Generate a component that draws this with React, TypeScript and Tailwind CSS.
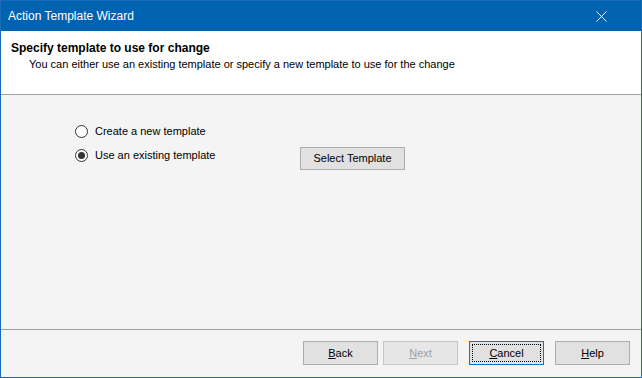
import React from 'react';

const font = { fontFamily: '"Liberation Sans", Arial, sans-serif' };

interface BtnProps {
  label: string;
  disabled?: boolean;
  focused?: boolean;
  className?: string;
}

const WinButton = ({ label, disabled, focused, className = '' }: BtnProps) => (
  <button
    className={`relative h-[24px] w-[75px] border text-[11px] leading-none ${
      focused ? 'border-[#0078d7]' : disabled ? 'border-[#c6c6c6]' : 'border-[#adadad]'
    } ${disabled ? 'bg-[#e6e6e6] text-[#a0a0a0]' : 'bg-[#e1e1e1] text-black'} ${className}`}
  >
    {focused && (
      <span className="absolute inset-[2px] border border-dotted border-black" />
    )}
    <span className="relative">
      <u>{label[0]}</u>
      {label.slice(1)}
    </span>
  </button>
);

const Radio = ({ checked }: { checked?: boolean }) => (
  <span className="flex h-[13px] w-[13px] items-center justify-center rounded-full border border-[#333333] bg-white">
    {checked && <span className="h-[7px] w-[7px] rounded-full bg-[#333333]" />}
  </span>
);

export default function App() {
  return (
    <div
      className="flex h-[378px] w-[642px] flex-col border border-[#1a6bb5] bg-[#f4f4f4] text-black"
      style={font}
    >
      {/* Title bar */}
      <div className="flex h-[30px] items-center justify-between bg-[#0063b1] pl-[7px] pr-[34px] text-[12px] text-white">
        <span>Action Template Wizard</span>
        <svg width="11" height="11" viewBox="0 0 11 11">
          <path d="M0.5 0.5 L10.5 10.5 M10.5 0.5 L0.5 10.5" stroke="white" strokeWidth="1" />
        </svg>
      </div>

      {/* Header */}
      <div className="h-[64px] border-b border-[#a0a0a0] bg-white pl-[10px] pt-[9px]">
        <div className="text-[12px] font-bold leading-[16px]">Specify template to use for change</div>
        <div className="pl-[18px] text-[11px] leading-[16px]">
          You can either use an existing template or specify a new template to use for the change
        </div>
      </div>

      {/* Body */}
      <div className="flex-1 pl-[74px] pt-[24px] text-[11px]">
        <div className="flex h-[24px] items-center">
          <Radio />
          <span className="ml-[7px]">Create a new template</span>
        </div>
        <div className="flex h-[24px] items-center">
          <div className="flex w-[225px] items-center">
            <Radio checked />
            <span className="ml-[7px]">Use an existing template</span>
          </div>
          <button className="mt-[6px] h-[23px] w-[105px] border border-[#adadad] bg-[#e1e1e1] text-[11px]">
            Select Template
          </button>
        </div>
      </div>

      {/* Footer */}
      <div className="flex h-[48px] justify-end border-t border-[#a0a0a0] pr-[11px] pt-[11px]">
        <WinButton label="Back" />
        <WinButton label="Next" disabled className="ml-[5px]" />
        <WinButton label="Cancel" focused className="ml-[11px]" />
        <WinButton label="Help" className="ml-[11px]" />
      </div>
    </div>
  );
}
